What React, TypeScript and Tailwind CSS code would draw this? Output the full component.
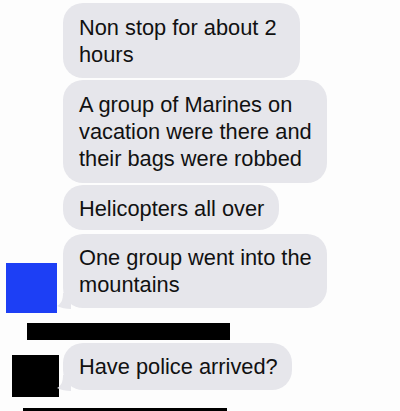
import React from "react";

const font = { fontFamily: '"Liberation Sans", Arial, sans-serif' };

function Tail() {
  return (
    <svg
      className="absolute left-[-6px] bottom-[-1px]"
      width="14"
      height="16"
      viewBox="0 0 14 16"
    >
      <path d="M14 0 L14 16 C9 16 4 15 0 13 C4 11 6 7 6 0 Z" fill="#e6e6eb" />
    </svg>
  );
}

export default function App() {
  return (
    <div
      className="w-[400px] h-[411px] overflow-hidden bg-[#fdfdfd] text-[#111111] text-[21.8px] leading-[27px]"
      style={font}
    >
      <div className="flex flex-col">
        <div className="mt-[3px] ml-[63px] w-[237px] h-[75px] rounded-[20px] bg-[#e6e6eb] pl-[16px] pt-[11px]">
          Non stop for about 2
          <br />
          hours
        </div>
        <div className="mt-[2px] ml-[63px] w-[264px] h-[103px] rounded-[20px] bg-[#e6e6eb] pl-[16px] pt-[11px]">
          A group of Marines on
          <br />
          vacation were there and
          <br />
          their bags were robbed
        </div>
        <div className="mt-[2px] ml-[63px] w-[216px] h-[45px] rounded-[20px] bg-[#e6e6eb] pl-[16px] pt-[10px]">
          Helicopters all over
        </div>
        <div className="mt-[4px] flex items-start">
          <div className="w-[63px] shrink-0">
            <div className="ml-[6px] mt-[29px] w-[51px] h-[50px] bg-[#1d3ff5]" />
          </div>
          <div className="relative w-[264px] h-[74px] rounded-[20px] bg-[#e6e6eb] pl-[16px] pt-[10px]">
            <Tail />
            <span className="relative">
              One group went into the
              <br />
              mountains
            </span>
          </div>
        </div>
        <div className="mt-[10px] ml-[27px] w-[203px] h-[17px] bg-black" />
        <div className="mt-[3px] flex items-start">
          <div className="w-[63px] shrink-0">
            <div className="ml-[12px] mt-[12px] w-[47px] h-[42px] bg-black" />
          </div>
          <div className="relative w-[229px] h-[47px] rounded-[20px] bg-[#e6e6eb] pl-[16px] pt-[10px]">
            <Tail />
            <span className="relative">Have police arrived?</span>
          </div>
        </div>
        <div className="mt-[11px] ml-[23px] w-[204px] h-[6px] bg-black" />
      </div>
    </div>
  );
}
